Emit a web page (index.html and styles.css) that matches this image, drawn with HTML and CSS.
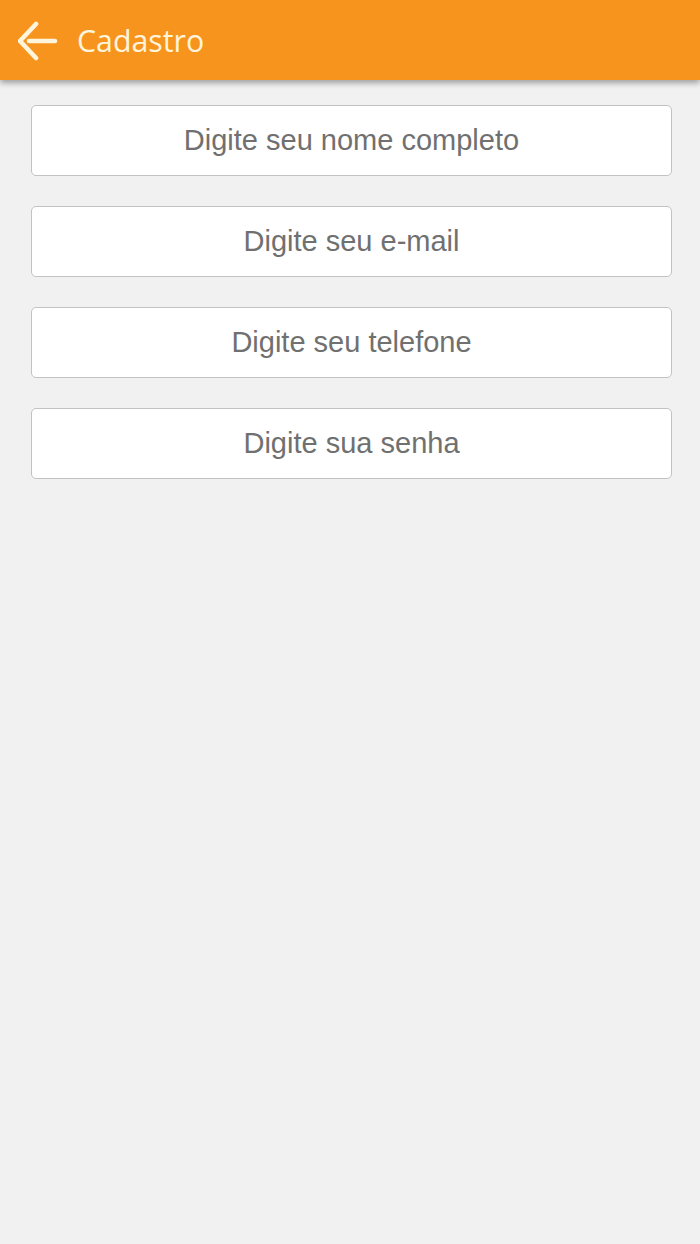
FILE: index.html
```html
<!DOCTYPE html>
<html lang="pt">
<head>
<meta charset="utf-8">
<title>Cadastro</title>
<link rel="stylesheet" href="styles.css">
</head>
<body>
<header class="bar">
  <svg class="back" width="40" height="42" viewBox="0 0 40 42" aria-hidden="true">
    <path d="M11 21 H37 M18 4 L2 21 L18 38" fill="none" stroke="#fff4dc" stroke-width="4.6" stroke-linecap="round" stroke-linejoin="round"/>
  </svg>
  <h1 class="title">Cadastro</h1>
</header>
<main class="form">
  <input class="field" type="text" placeholder="Digite seu nome completo">
  <input class="field" type="email" placeholder="Digite seu e-mail">
  <input class="field" type="tel" placeholder="Digite seu telefone">
  <input class="field" type="password" placeholder="Digite sua senha">
</main>
</body>
</html>
```
FILE: styles.css
```css
html, body {
  margin: 0;
  padding: 0;
  background: #f1f1f1;
  height: 100%;
}
body {
  font-family: "Liberation Sans", Arial, sans-serif;
}
.bar {
  height: 80px;
  background: #f7941e;
  display: flex;
  align-items: center;
  padding-left: 18px;
  gap: 19px;
  box-shadow: 0 3px 6px rgba(0, 0, 0, 0.35);
  position: relative;
  z-index: 1;
}
.back {
  display: block;
  flex: none;
  margin-top: 1px;
}
.title {
  margin: 0;
  font-family: "Open Sans", "Noto Sans", sans-serif;
  font-weight: 400;
  font-size: 30.3px;
  color: #fff4dc;
  line-height: 1;
  margin-top: 3px;
}
.form {
  display: flex;
  flex-direction: column;
  gap: 30px;
  padding: 25px 28px 0 31px;
}
.field {
  box-sizing: border-box;
  width: 100%;
  height: 71px;
  margin: 0;
  border: 1px solid #c2c2c2;
  border-radius: 5px;
  background: #ffffff;
  font-family: "Liberation Sans", Arial, sans-serif;
  font-size: 29px;
  color: #6a6a6a;
  text-align: center;
  padding: 0 10px;
  outline: none;
}
.field::placeholder {
  color: #707070;
  opacity: 1;
}
```
